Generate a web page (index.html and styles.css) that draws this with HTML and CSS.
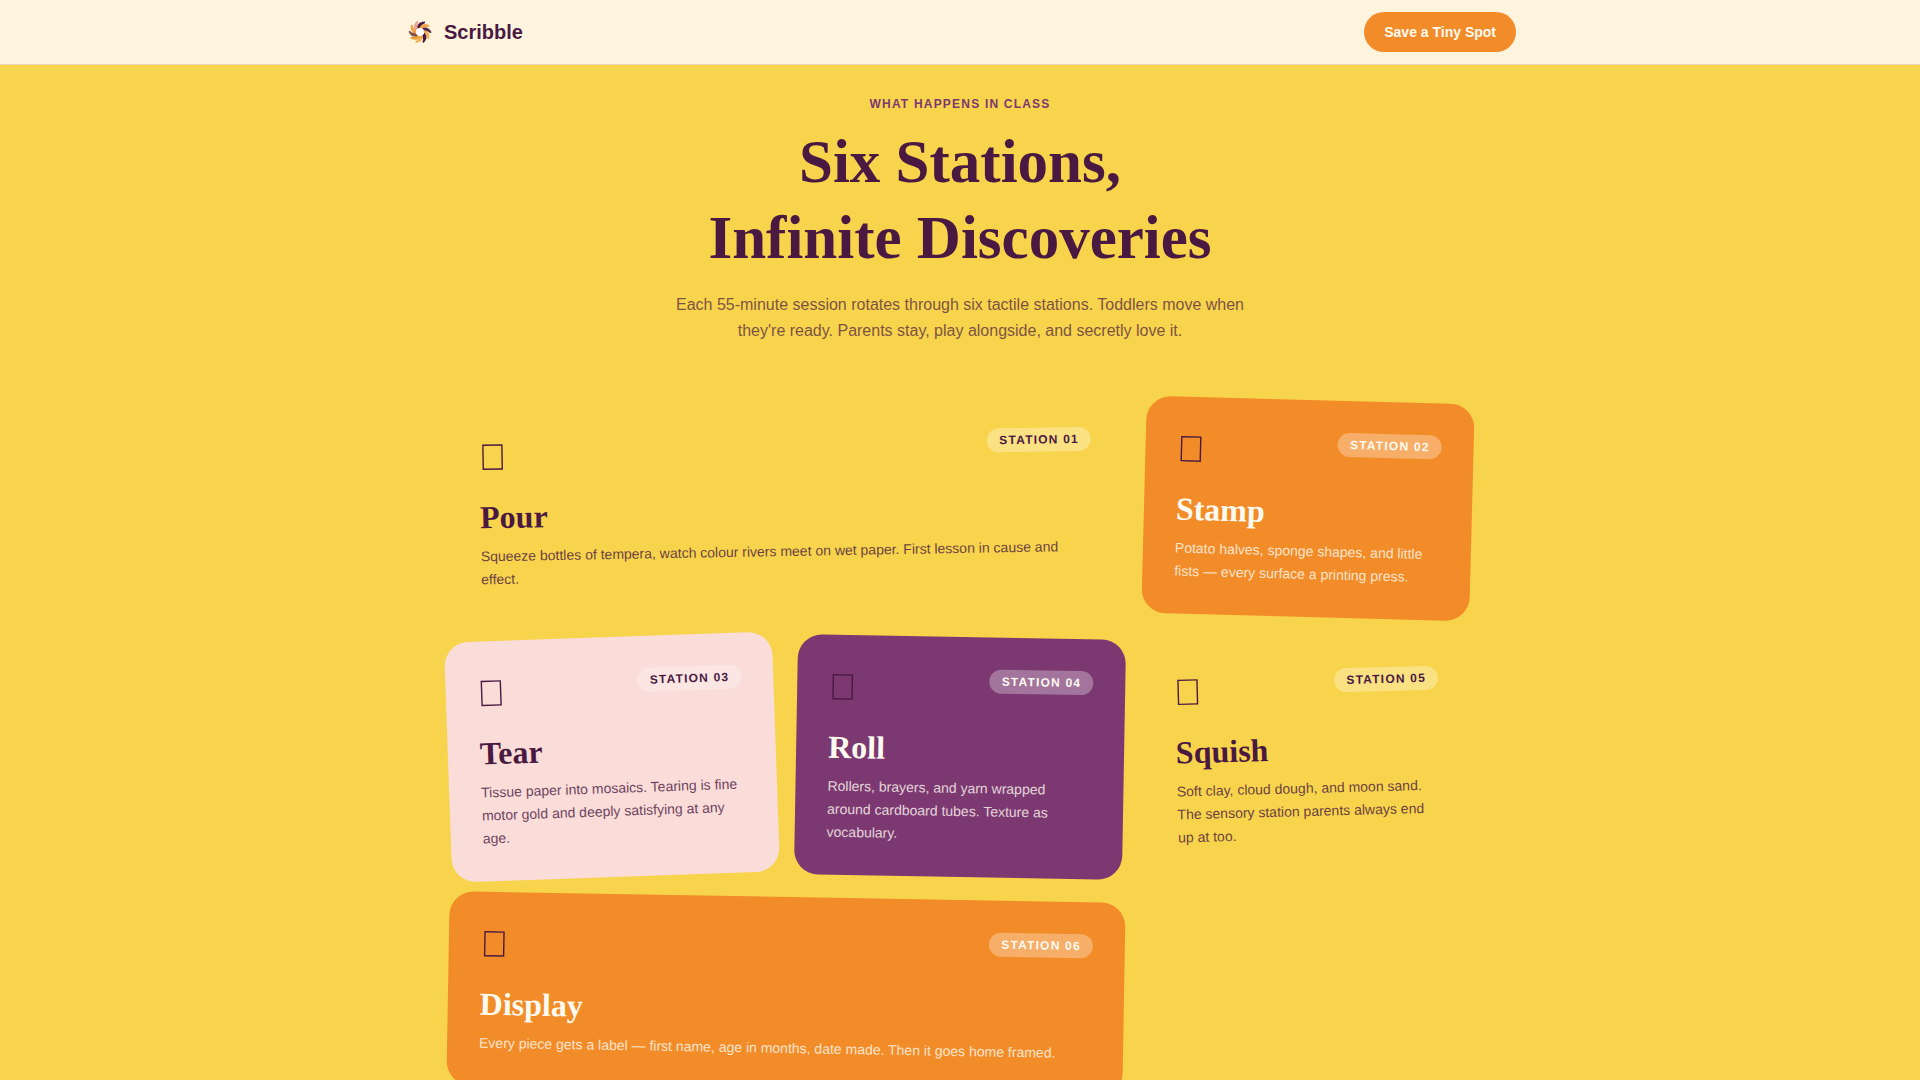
FILE: index.html
```html
<!DOCTYPE html>
<html lang="en">
<head>
    <meta charset="UTF-8">
    <meta name="viewport" content="width=device-width, initial-scale=1.0">
    <title>Scribble</title>
    <link rel="stylesheet" href="styles.css">
</head>
<body>
    <header class="nav">
        <div class="nav-inner">
            <a class="logo" href="#">
                <svg class="logo-mark" viewBox="0 0 32 32" aria-hidden="true">
                    <defs>
                        <path id="petal" d="M13 13 C12 9 14 6 19 5 C20 5 20 7 19 7 C17 8 17 10 17 12 Z" />
                    </defs>
                    <use href="#petal" fill="#e8a497" transform="rotate(-30 16 16)" />
                    <use href="#petal" fill="#4a1942" transform="rotate(8 16 16)" />
                    <use href="#petal" fill="#f3a446" transform="rotate(38 16 16)" />
                    <use href="#petal" fill="#5a2a48" transform="rotate(75 16 16)" />
                    <use href="#petal" fill="#f0b45c" transform="rotate(110 16 16)" />
                    <use href="#petal" fill="#4a1942" transform="rotate(145 16 16)" />
                    <use href="#petal" fill="#f3b052" transform="rotate(185 16 16)" />
                    <use href="#petal" fill="#e9a23b" transform="rotate(220 16 16)" />
                    <use href="#petal" fill="#8a5048" transform="rotate(255 16 16)" />
                    <use href="#petal" fill="#f0a050" transform="rotate(292 16 16)" />
                    <circle cx="16" cy="16" r="4" fill="#fff" />
                </svg>
                Scribble
            </a>
            <button class="button" type="button">Save a Tiny Spot</button>
        </div>
    </header>

    <main class="stations">
        <div class="intro">
            <p class="eyebrow">What happens in class</p>
            <h1>Six Stations,<br>Infinite Discoveries</h1>
            <p class="lead">Each 55-minute session rotates through six tactile stations. Toddlers move when they're ready. Parents stay, play alongside, and secretly love it.</p>
        </div>

        <div class="grid">
            <article class="card wide pour">
                <div class="card-top">
                    <svg class="icon" viewBox="0 0 28 44" aria-hidden="true"><rect x="4" y="8" width="19" height="24" /></svg>
                    <span class="badge">Station 01</span>
                </div>
                <h2>Pour</h2>
                <p>Squeeze bottles of tempera, watch colour rivers meet on wet paper. First lesson in cause and effect.</p>
            </article>
            <article class="card light stamp">
                <div class="card-top">
                    <svg class="icon" viewBox="0 0 28 44" aria-hidden="true"><rect x="4" y="8" width="19" height="24" /></svg>
                    <span class="badge">Station 02</span>
                </div>
                <h2>Stamp</h2>
                <p>Potato halves, sponge shapes, and little fists — every surface a printing press.</p>
            </article>
            <article class="card tear">
                <div class="card-top">
                    <svg class="icon" viewBox="0 0 28 44" aria-hidden="true"><rect x="4" y="8" width="19" height="24" /></svg>
                    <span class="badge">Station 03</span>
                </div>
                <h2>Tear</h2>
                <p>Tissue paper into mosaics. Tearing is fine motor gold and deeply satisfying at any age.</p>
            </article>
            <article class="card light roll">
                <div class="card-top">
                    <svg class="icon" viewBox="0 0 28 44" aria-hidden="true"><rect x="4" y="8" width="19" height="24" /></svg>
                    <span class="badge">Station 04</span>
                </div>
                <h2>Roll</h2>
                <p>Rollers, brayers, and yarn wrapped around cardboard tubes. Texture as vocabulary.</p>
            </article>
            <article class="card squish">
                <div class="card-top">
                    <svg class="icon" viewBox="0 0 28 44" aria-hidden="true"><rect x="4" y="8" width="19" height="24" /></svg>
                    <span class="badge">Station 05</span>
                </div>
                <h2>Squish</h2>
                <p>Soft clay, cloud dough, and moon sand. The sensory station parents always end up at too.</p>
            </article>
            <article class="card wide light display">
                <div class="card-top">
                    <svg class="icon" viewBox="0 0 28 44" aria-hidden="true"><rect x="4" y="8" width="19" height="24" /></svg>
                    <span class="badge">Station 06</span>
                </div>
                <h2>Display</h2>
                <p>Every piece gets a label — first name, age in months, date made. Then it goes home framed.</p>
            </article>
        </div>
    </main>
</body>
</html>
```
FILE: styles.css
```css
:root {
    --plum: #4a1942;
    --grape: #7b3871;
    --orange: #f28c28;
    --yellow: #f8d44c;
    --pink: #fadcd9;
    --cream: #fff4de;
    --white: #fffaf0;
}
* {
    box-sizing: border-box;
}
body {
    margin: 0;
    font-family: "Liberation Sans", Arial, sans-serif;
    background-color: var(--yellow);
    color: var(--plum);
}
h1, h2, p {
    margin: 0;
}
h1, h2 {
    font-family: "Liberation Serif", "Times New Roman", serif;
    font-weight: bold;
}

.nav {
    position: sticky;
    top: 0;
    z-index: 10;
    background-color: var(--cream);
    border-bottom: 1px solid #ecd9b4;
}
.nav-inner {
    max-width: 1160px;
    margin: 0 auto;
    padding: 12px 24px;
    display: flex;
    justify-content: space-between;
    align-items: center;
}
.logo {
    display: flex;
    align-items: center;
    gap: 8px;
    font-size: 20px;
    font-weight: bold;
    color: var(--plum);
    text-decoration: none;
}
.logo-mark {
    width: 32px;
    height: 32px;
}
.button {
    height: 40px;
    padding: 0 20px;
    border: none;
    border-radius: 20px;
    background-color: var(--orange);
    color: var(--white);
    font-family: inherit;
    font-size: 14px;
    font-weight: bold;
    cursor: pointer;
}

.stations {
    max-width: 1072px;
    margin: 0 auto;
    padding: 29px 24px 96px;
}
.intro {
    margin-bottom: 56px;
    text-align: center;
}
.eyebrow {
    margin-bottom: 10px;
    font-size: 12px;
    line-height: 20px;
    font-weight: bold;
    letter-spacing: 0.1em;
    text-transform: uppercase;
    color: var(--grape);
}
h1 {
    margin-bottom: 16px;
    font-size: 61px;
    line-height: 76px;
}
.lead {
    max-width: 580px;
    margin: 0 auto;
    font-size: 16px;
    line-height: 26px;
    opacity: 0.7;
}

.grid {
    display: grid;
    grid-template-columns: repeat(3, 1fr);
    gap: 20px;
}
.card {
    padding: 32px 32px 31px;
    border-radius: 24px;
}
.wide {
    grid-column: span 2;
}
.card-top {
    display: flex;
    justify-content: space-between;
    align-items: flex-start;
    margin-bottom: 16px;
}
.icon {
    width: 28px;
    height: 44px;
    fill: none;
    stroke: var(--plum);
    stroke-width: 1.4;
}
.badge {
    padding: 0 12px;
    border-radius: 12px;
    background-color: rgba(255, 255, 255, 0.3);
    font-size: 12px;
    line-height: 24px;
    font-weight: bold;
    letter-spacing: 0.1em;
    text-transform: uppercase;
}
.card h2 {
    margin-bottom: 8px;
    font-size: 32px;
    line-height: 40px;
}
.card p {
    font-size: 14px;
    line-height: 23px;
    opacity: 0.8;
}
.light {
    color: var(--white);
}

.pour {
    transform: rotate(-1deg);
}
.stamp {
    background-color: var(--orange);
    transform: rotate(1.5deg);
}
.tear {
    background-color: var(--pink);
    transform: rotate(-2deg);
}
.roll {
    background-color: var(--grape);
    transform: rotate(1deg);
}
.squish {
    transform: rotate(-1.5deg);
}
.display {
    background-color: var(--orange);
    transform: rotate(1deg);
}

@media (max-width: 800px) {
    .grid {
        grid-template-columns: 1fr;
    }
    .wide {
        grid-column: auto;
    }
}
```
